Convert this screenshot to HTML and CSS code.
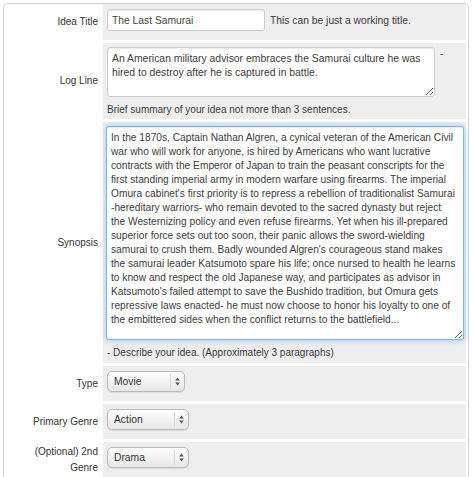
FILE: index.html
```html
<!DOCTYPE html>
<html>
<head>
<meta charset="utf-8">
<link rel="stylesheet" href="styles.css">
</head>
<body>
<form class="form">
  <div class="row">
    <label class="lbl">Idea Title</label>
    <div class="ctl ctl-inline">
      <input class="inp inp-title" type="text" value="The Last Samurai">
      <span class="help-inline">This can be just a working title.</span>
    </div>
  </div>
  <div class="row">
    <label class="lbl">Log Line</label>
    <div class="ctl ctl-text">
      <div class="ta-line">
        <textarea class="ta ta-log" wrap="off">An American military advisor embraces the Samurai culture he was
hired to destroy after he is captured in battle.</textarea>
        <span class="dash">-</span>
      </div>
      <p class="help-block">Brief summary of your idea not more than 3 sentences.</p>
    </div>
  </div>
  <div class="row">
    <label class="lbl">Synopsis</label>
    <div class="ctl ctl-text ctl-syn">
      <textarea class="ta ta-syn" wrap="off">In the 1870s, Captain Nathan Algren, a cynical veteran of the American Civil
war who will work for anyone, is hired by Americans who want lucrative
contracts with the Emperor of Japan to train the peasant conscripts for the
first standing imperial army in modern warfare using firearms. The imperial
Omura cabinet's first priority is to repress a rebellion of traditionalist Samurai
-hereditary warriors- who remain devoted to the sacred dynasty but reject
the Westernizing policy and even refuse firearms. Yet when his ill-prepared
superior force sets out too soon, their panic allows the sword-wielding
samurai to crush them. Badly wounded Algren's courageous stand makes
the samurai leader Katsumoto spare his life; once nursed to health he learns
to know and respect the old Japanese way, and participates as advisor in
Katsumoto's failed attempt to save the Bushido tradition, but Omura gets
repressive laws enacted- he must now choose to honor his loyalty to one of
the embittered sides when the conflict returns to the battlefield...</textarea>
      <p class="help-block">- Describe your idea. (Approximately 3 paragraphs)</p>
    </div>
  </div>
  <div class="row">
    <label class="lbl">Type</label>
    <div class="ctl ctl-sel">
      <div class="sel sel-type">
        <select><option>Movie</option></select>
        <span class="arrows"><svg width="5" height="9" viewBox="0 0 5 9"><path d="M2.5 0.5 L4.8 3.5 H0.2 Z M2.5 8.5 L4.8 5.5 H0.2 Z" fill="#555"/></svg></span>
      </div>
    </div>
  </div>
  <div class="row">
    <label class="lbl">Primary Genre</label>
    <div class="ctl ctl-sel">
      <div class="sel">
        <select><option>Action</option></select>
        <span class="arrows"><svg width="5" height="9" viewBox="0 0 5 9"><path d="M2.5 0.5 L4.8 3.5 H0.2 Z M2.5 8.5 L4.8 5.5 H0.2 Z" fill="#555"/></svg></span>
      </div>
    </div>
  </div>
  <div class="row">
    <label class="lbl">(Optional) 2nd Genre</label>
    <div class="ctl ctl-sel">
      <div class="sel">
        <select><option>Drama</option></select>
        <span class="arrows"><svg width="5" height="9" viewBox="0 0 5 9"><path d="M2.5 0.5 L4.8 3.5 H0.2 Z M2.5 8.5 L4.8 5.5 H0.2 Z" fill="#555"/></svg></span>
      </div>
    </div>
  </div>
</form>
</body>
</html>
```
FILE: styles.css
```css
html, body {
  margin: 0;
  padding: 0;
  background: #fff;
}
body {
  font-family: "Liberation Sans", Arial, sans-serif;
  font-size: 10px;
  color: #333;
}
.form {
  margin: 3px 0 0 3px;
  width: 463px;
  padding-right: 1px;
  border: 1px solid #d2d2d2;
  border-bottom: none;
  border-radius: 5px 5px 0 0;
  display: flex;
  flex-direction: column;
  gap: 3px;
  padding-bottom: 20px;
}
.row {
  display: grid;
  grid-template-columns: 99px 363px;
}
.lbl {
  display: flex;
  align-items: center;
  justify-content: flex-end;
  text-align: right;
  padding: 0 5px 0 14px;
  line-height: 16px;
  color: #333;
}
.ctl {
  background: #eeeeee;
}
.ctl-inline {
  display: flex;
  align-items: center;
  padding: 5px 4px 9px;
}
.inp {
  box-sizing: border-box;
  width: 158px;
  height: 22px;
  margin: 0;
  padding: 0 4px;
  border: 1px solid #cccccc;
  border-radius: 3px;
  background: #fff;
  box-shadow: inset 0 1px 1px rgba(0,0,0,0.075);
  font-family: "Liberation Sans", Arial, sans-serif;
  font-size: 10.3px;
  color: #444;
}
.help-inline {
  margin-left: 5px;
  color: #3a3a3a;
  font-size: 10.3px;
}
.ctl-text {
  padding: 4px 4px 2px;
}
.ta-line {
  display: flex;
  align-items: flex-start;
}
.ta {
  box-sizing: border-box;
  display: block;
  margin: 0;
  padding: 4px 4px;
  border: 1px solid #cccccc;
  border-radius: 3px;
  background: #fff;
  box-shadow: inset 0 1px 1px rgba(0,0,0,0.075);
  font-family: "Liberation Sans", Arial, sans-serif;
  font-size: 10.2px;
  line-height: 14px;
  color: #3c3c3c;
  overflow: hidden;
  white-space: pre;
}
.ta-log {
  width: 328px;
  height: 50px;
  font-size: 10.4px;
}
.dash {
  margin-left: 5px;
  margin-top: 1px;
  color: #444;
}
.ctl-syn {
  padding: 4px 3px 3px;
}
.ta-syn {
  width: 358px;
  height: 214px;
  border-color: rgba(82,168,236,0.8);
  box-shadow: inset 0 1px 1px rgba(0,0,0,0.075), 0 0 6px rgba(82,168,236,0.55);
  outline: none;
}
.help-block {
  margin: 6px 0 0;
  line-height: 14px;
  color: #3a3a3a;
}
.ctl-syn .help-block {
  margin-left: 1px;
}
.ctl-sel {
  height: 35px;
  box-sizing: border-box;
  padding: 5px 4px 0;
}
.sel {
  position: relative;
  width: 82px;
  height: 21px;
}
.sel-type {
  width: 78px;
}
.sel select {
  appearance: none;
  -webkit-appearance: none;
  box-sizing: border-box;
  width: 100%;
  height: 100%;
  margin: 0;
  padding: 0 0 0 6px;
  border: 1px solid #b9b9b9;
  border-radius: 5px;
  background: linear-gradient(#ffffff, #f0f0f0 60%, #e6e6e6);
  box-shadow: 0 1px 1px rgba(0,0,0,0.08);
  font-family: "Liberation Sans", Arial, sans-serif;
  font-size: 10.3px;
  color: #333;
}
.arrows {
  position: absolute;
  top: 3px;
  right: 1px;
  bottom: 3px;
  width: 13px;
  border-left: 1px solid #d8d8d8;
  display: flex;
  align-items: center;
  justify-content: center;
  pointer-events: none;
}
```
